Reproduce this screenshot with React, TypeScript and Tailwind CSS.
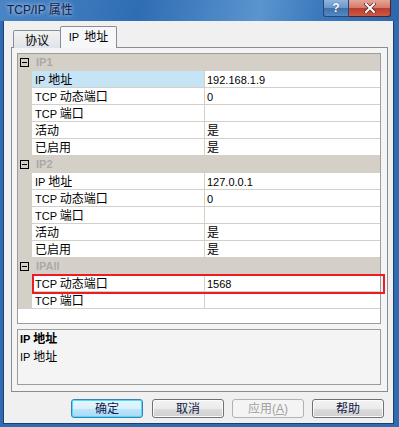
import React from "react";

const FONT = '"Liberation Sans","Noto Sans CJK SC",sans-serif';

function Mixed({ s }: { s: string }) {
  const parts = s.split(/([\u4e00-\u9fff]+)/).filter((p) => p.length > 0);
  return (
    <span className="whitespace-pre">
      {parts.map((p, i) =>
        /[\u4e00-\u9fff]/.test(p) ? (
          <span key={i} className="text-[12px]">{p}</span>
        ) : (
          <span key={i} className="text-[11px]">{p}</span>
        )
      )}
    </span>
  );
}

type Row = { name: string; value: string; selected?: boolean };
type Group = { name: string; rows: Row[] };

const groups: Group[] = [
  {
    name: "IP1",
    rows: [
      { name: "IP 地址", value: "192.168.1.9", selected: true },
      { name: "TCP 动态端口", value: "0" },
      { name: "TCP 端口", value: "" },
      { name: "活动", value: "是" },
      { name: "已启用", value: "是" },
    ],
  },
  {
    name: "IP2",
    rows: [
      { name: "IP 地址", value: "127.0.0.1" },
      { name: "TCP 动态端口", value: "0" },
      { name: "TCP 端口", value: "" },
      { name: "活动", value: "是" },
      { name: "已启用", value: "是" },
    ],
  },
  {
    name: "IPAll",
    rows: [
      { name: "TCP 动态端口", value: "1568" },
      { name: "TCP 端口", value: "" },
    ],
  },
];

function Category({ name }: { name: string }) {
  return (
    <div className="flex h-[17px] items-center bg-[#d4d0c8]">
      <div className="ml-[2px] flex h-[9px] w-[9px] items-center justify-center border border-black">
        <div className="h-[1px] w-[5px] bg-black" />
      </div>
      <span className="ml-[7px] text-[11px] font-bold leading-none text-[#a9a9a9]">{name}</span>
    </div>
  );
}

function PropRow({ row }: { row: Row }) {
  return (
    <div className="flex h-[17px]">
      <div className="w-[14px] shrink-0 bg-[#d4d0c8]" />
      <div
        className={
          "flex w-[173px] shrink-0 items-center border-b border-r border-[#d4d0c8] pl-[3px] leading-none text-black " +
          (row.selected ? "bg-[#c5e4f5]" : "bg-white")
        }
      >
        <Mixed s={row.name} />
      </div>
      <div className="flex flex-1 items-center border-b border-[#d4d0c8] bg-white pl-[2px] leading-none text-black">
        <Mixed s={row.value} />
      </div>
    </div>
  );
}

function Btn({ label, def, disabled }: { label: React.ReactNode; def?: boolean; disabled?: boolean }) {
  let cls =
    "flex h-[19px] w-[72px] items-center justify-center rounded-[3px] border text-[12px] leading-none ";
  if (disabled) {
    cls += "border-[#adb2b5] bg-[#f4f4f4] text-[#a0a0a0]";
  } else if (def) {
    cls +=
      "border-[#3c7fb1] bg-[linear-gradient(180deg,#eaf6fd_0%,#d9f0fc_50%,#bee6fd_51%,#a7d9f5_100%)] text-[#101a4a] shadow-[inset_0_0_0_1px_#48dffc]";
  } else {
    cls +=
      "border-[#707070] bg-[linear-gradient(180deg,#f2f2f2_0%,#ebebeb_50%,#dddddd_51%,#cfcfcf_100%)] text-[#101a4a] shadow-[inset_0_0_0_1px_#fcfcfc]";
  }
  return <div className={cls}>{label}</div>;
}

export default function App() {
  return (
    <div
      className="relative flex h-[427px] w-[399px] flex-col overflow-hidden bg-[#2f6cb2]"
      style={{ fontFamily: FONT }}
    >
      {/* Title bar */}
      <div className="relative h-[21px] shrink-0 bg-[linear-gradient(100deg,#4a85c6_0%,#2f6db3_35%,#5b94cf_65%,#3b78bc_80%,#2a67ad_100%)]">
        <div className="absolute left-[7px] top-[3px] text-[12px] leading-[14px] text-[#12204d] [text-shadow:0_0_4px_rgba(255,255,255,0.9)]">
          TCP/IP 属性
        </div>
        <div className="absolute right-[8px] top-0 flex h-[17px]">
          <div className="flex h-[17px] w-[26px] items-center justify-center rounded-bl-[3px] border border-t-0 border-[#24467a] bg-[linear-gradient(180deg,#8fb4dd_0%,#6b97c9_50%,#3f70aa_51%,#5688c2_100%)] text-[12px] font-bold leading-none text-white [text-shadow:0_0_1px_#1d3c6b]">
            ?
          </div>
          <div className="flex h-[17px] w-[42px] items-center justify-center rounded-br-[3px] border border-l-0 border-t-0 border-[#5a1d1d] bg-[linear-gradient(180deg,#e6a596_0%,#d27a6a_50%,#bb3c2a_51%,#c95a44_100%)]">
            <svg width="12" height="10" viewBox="0 0 12 10">
              <path d="M2 1 L10 9 M10 1 L2 9" stroke="#5a2a2a" strokeWidth="3.4" strokeLinecap="square" />
              <path d="M2 1 L10 9 M10 1 L2 9" stroke="#ffffff" strokeWidth="2" strokeLinecap="square" />
            </svg>
          </div>
        </div>
      </div>

      {/* Client area */}
      <div className="ml-[3px] flex h-[403px] w-[391px] flex-col border border-t-0 border-[#1c3f70] bg-[#f0f0f0] pl-[7px] pt-[5px]">
        {/* Tabs */}
        <div className="relative z-10 flex h-[22px] items-end pl-[2px]">
          <div className="flex h-[18px] w-[48px] items-center justify-center rounded-t-[2px] border border-b-0 border-[#898c95] bg-[linear-gradient(180deg,#f2f2f2_0%,#ebebeb_50%,#dde3ec_100%)] pt-[2px] text-[12px] leading-none text-black">
            协议
          </div>
          <div className="-ml-[1px] flex h-[22px] w-[57px] items-center justify-center rounded-t-[2px] border border-b-0 border-[#898c95] bg-[#f6f7f9] pb-[1px] text-[12px] leading-none text-black">
            <span className="text-[11px]">IP</span>
            <span className="ml-[5px]">地址</span>
          </div>
        </div>
        {/* Panel */}
        <div className="-mt-[1px] flex h-[345px] w-[377px] flex-col border border-[#898c95] bg-[#f4f4f4] pl-[5px] pt-[5px]">
          {/* Grid */}
          <div className="relative h-[271px] w-[364px] border border-[#9c9c9c] bg-white">
            {groups.map((g) => (
              <div key={g.name}>
                <Category name={g.name} />
                {g.rows.map((r, i) => (
                  <PropRow key={i} row={r} />
                ))}
              </div>
            ))}
            <div className="pointer-events-none absolute left-[14px] top-[220px] h-[20px] w-[353px] border-2 border-[#ec1c24]" />
          </div>
          {/* Description */}
          <div className="mt-[5px] h-[56px] w-[364px] border border-[#9c9c9c] bg-[#f4f4f4] pl-[2px] pt-[0px] text-black">
            <div className="font-bold leading-[16px]">
              <Mixed s="IP 地址" />
            </div>
            <div className="leading-[17px]">
              <Mixed s="IP 地址" />
            </div>
          </div>
        </div>
        {/* Buttons */}
        <div className="mt-[7px] flex gap-[8px] pl-[60px]">
          <Btn label="确定" def />
          <div className="ml-[1px]">
            <Btn label="取消" />
          </div>
          <Btn
            disabled
            label={
              <span>
                应用(<span className="underline">A</span>)
              </span>
            }
          />
          <Btn label="帮助" />
        </div>
      </div>
    </div>
  );
}
